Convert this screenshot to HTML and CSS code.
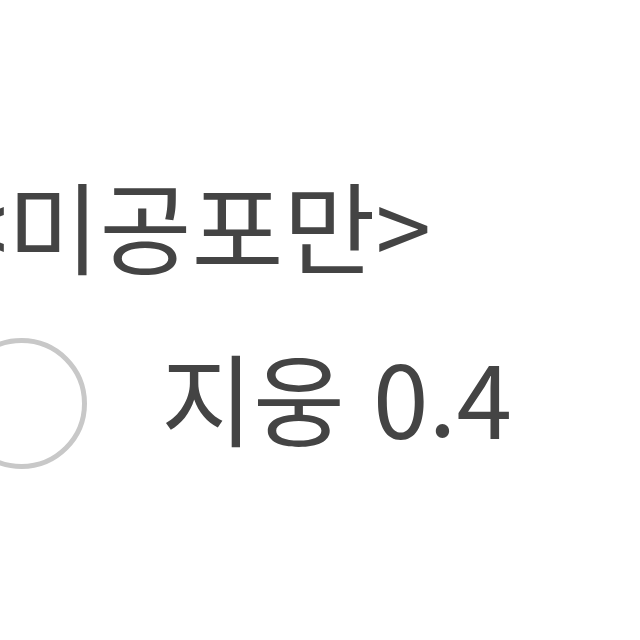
FILE: index.html
```html
<!DOCTYPE html>
<html lang="ko">
<head>
<meta charset="utf-8">
<link rel="stylesheet" href="styles.css">
</head>
<body>
<div class="page">
  <div class="title">&lt;미공포만&gt;</div>
  <div class="option">
    <span class="radio"></span>
    <span class="label">지웅 0.4</span>
  </div>
</div>
</body>
</html>
```
FILE: styles.css
```css
html, body {
  margin: 0;
  padding: 0;
  background: #ffffff;
  overflow: hidden;
}
.page {
  width: 640px;
  height: 640px;
  padding-top: 174px;
  box-sizing: border-box;
  font-family: "Noto Sans CJK KR", "Noto Sans", sans-serif;
  color: #444444;
}
.title {
  font-size: 100px;
  line-height: 1;
  margin-left: -48px;
  white-space: nowrap;
}
.option {
  display: flex;
  align-items: center;
  margin-top: 64px;
  margin-left: -44px;
  gap: 74px;
}
.radio {
  flex: none;
  width: 131px;
  height: 131px;
  box-sizing: border-box;
  border: 5px solid #c8c8c8;
  border-radius: 50%;
}
.label {
  font-size: 100px;
  line-height: 1;
  margin-bottom: 16px;
  white-space: nowrap;
}
```
